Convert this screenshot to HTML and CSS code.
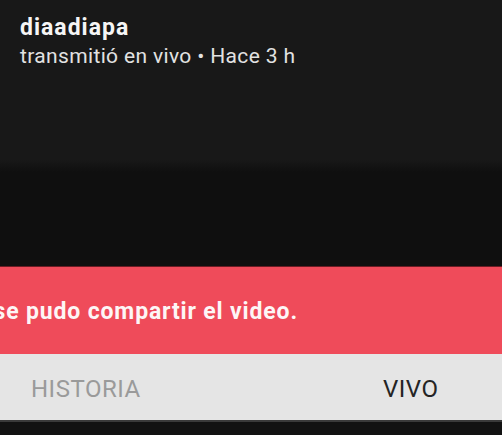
FILE: index.html
```html
<html lang="en">
  <head>
    <meta charset="UTF-8" />
    <meta name="viewport" content="width=device-width, initial-scale=1.0" />
    <title>Video</title>
    <link rel="stylesheet" href="styles.css">
  </head>
  <body>
    <div class="header">
      <div class="channel">diaadiapa</div>
      <div class="meta">transmitió en vivo • Hace 3 h</div>
    </div>

    <div class="toast">
      <span class="toast-text">No se pudo compartir el video.</span>
    </div>

    <div class="tabs">
      <div class="tab">HISTORIA</div>
      <div class="tab active">VIVO</div>
    </div>
    <div class="footer"></div>
  </body>
</html>
```

FILE: styles.css
```css
body {
  background-color: #121212;
  font-family: Roboto, "Noto Sans", sans-serif;
  margin: 0;
  overflow: hidden;
  width: 502px;
  height: 435px;
}

.header {
  background: linear-gradient(#181818 0, #181818 160px, #0f0f0f 172px);
  height: 266px;
  padding: 15px 20px 0 20px;
  box-sizing: border-box;
}

.channel {
  color: #f5f5f5;
  font-size: 23px;
  font-weight: 700;
  letter-spacing: 1px;
  line-height: 26px;
}

.meta {
  color: #e2e2e2;
  font-size: 21px;
  letter-spacing: 0.35px;
  line-height: 26px;
  margin-top: 2px;
}

.toast {
  background-color: #ef4b5a;
  border-top: 1px solid #6a1c24;
  height: 87px;
  display: flex;
  align-items: center;
  overflow: hidden;
}

.toast-text {
  color: #fdf6f6;
  font-size: 23px;
  font-weight: 700;
  letter-spacing: 0.85px;
  margin-left: -44px;
  white-space: nowrap;
  padding-top: 2px;
}

.tabs {
  background-color: #e5e5e5;
  display: flex;
  height: 66px;
  align-items: center;
}

.tab {
  color: #9a9a9a;
  font-size: 24px;
  letter-spacing: 0.5px;
  flex: 1;
  padding-left: 31px;
  padding-top: 4px;
}

.tab.active {
  color: #242424;
  flex: 0 0 auto;
  padding-left: 0;
  width: 119px;
}

.footer {
  border-top: 2px solid #3a3a3a;
  height: 20px;
}
```
